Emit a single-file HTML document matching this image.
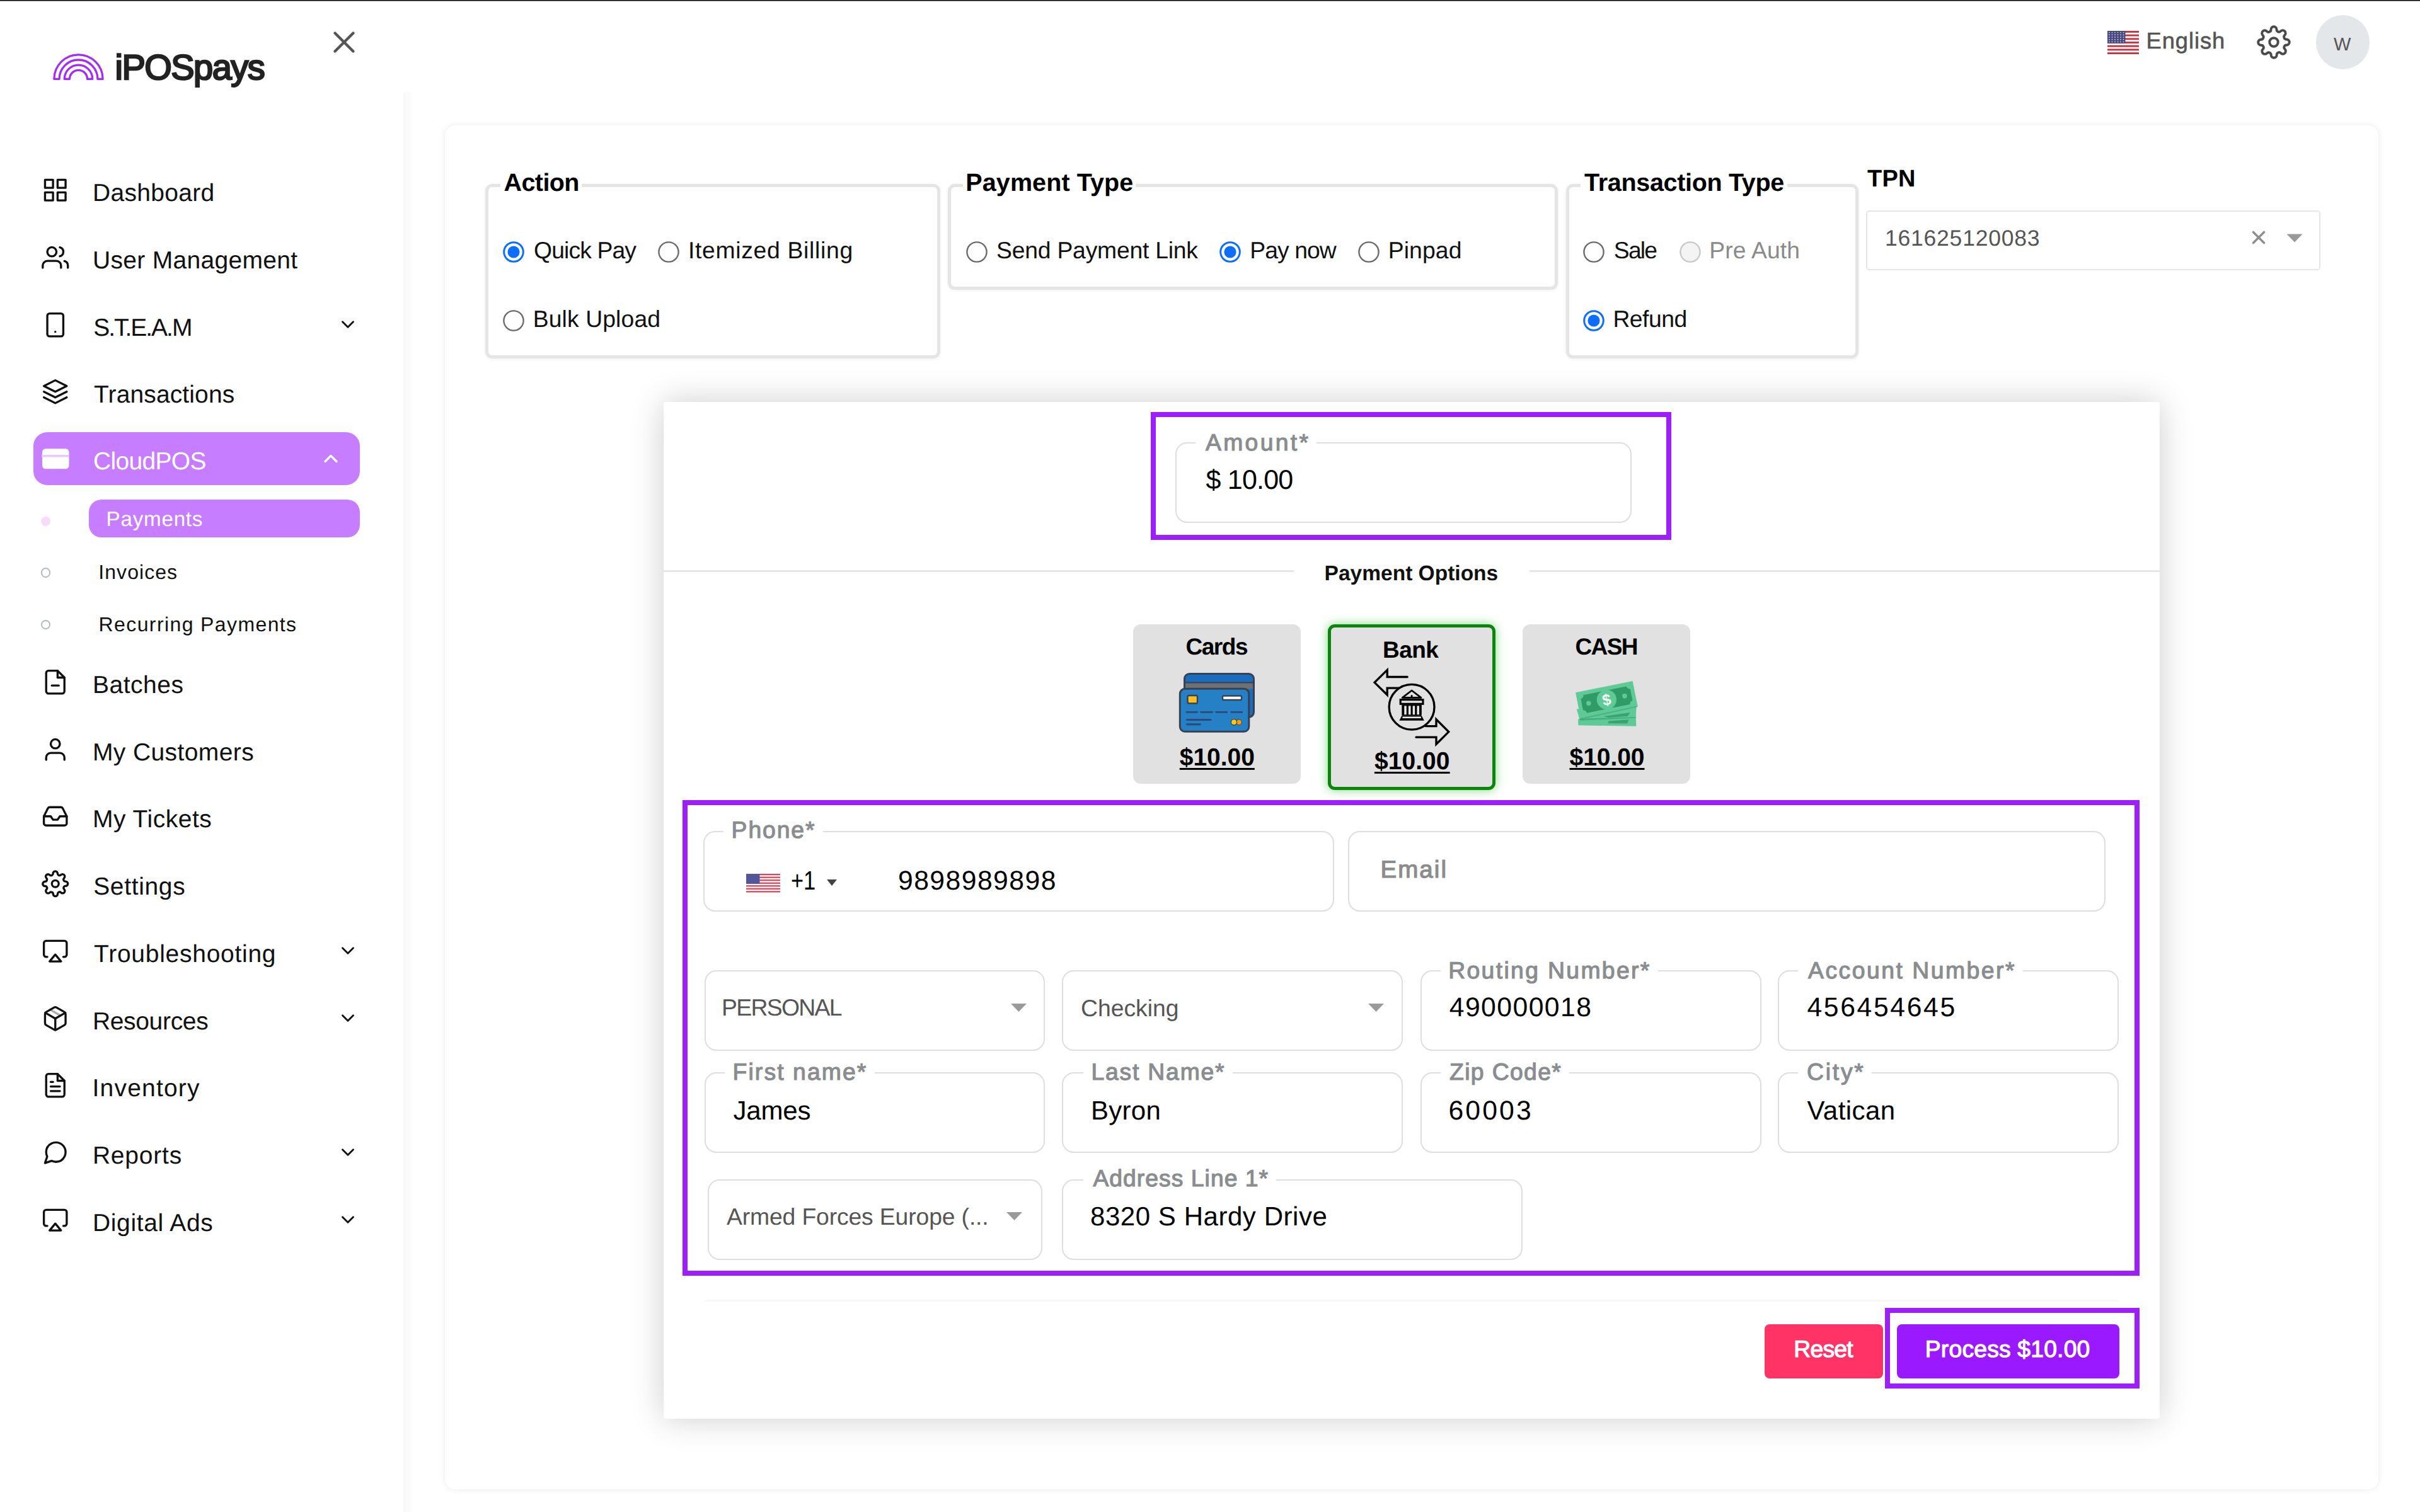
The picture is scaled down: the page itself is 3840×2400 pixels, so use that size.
<!DOCTYPE html>
<html lang="en"><head><meta charset="utf-8"><title>iPOSpays - Payments</title>
<style>
html,body{margin:0;padding:0;}
body{width:3840px;height:2400px;overflow:hidden;background:#fff;font-family:"Liberation Sans",sans-serif;position:relative;color:#000;}
.t{position:absolute;white-space:nowrap;line-height:1;display:block;text-rendering:geometricPrecision;font-kerning:normal;}
.b{position:absolute;box-sizing:border-box;}
svg{position:absolute;overflow:visible;}
@media (max-width:2000px){body{zoom:.5;}}
@media (max-width:1500px){body{zoom:.375;}}
@media (max-width:1300px){body{zoom:.33333;}}
@media (max-width:1000px){body{zoom:.25;}}
.ic{fill:none;stroke:#111;stroke-width:2;stroke-linecap:round;stroke-linejoin:round;}
</style></head><body>
<div class="b" style="left:0.0px;top:0.0px;width:3840.0px;height:1.0px;background:#000;"></div>
<div class="b" style="left:0.0px;top:1.0px;width:3840.0px;height:1.0px;background:#7d7d7d;"></div>
<div class="b" style="left:0.0px;top:2.0px;width:3840.0px;height:1.0px;background:#f2f2f2;"></div>
<div class="b" style="left:640.0px;top:146.0px;width:16.0px;height:2254.0px;background:linear-gradient(to right,#f8f8f8,#fcfcfc 70%,#fff);"></div>
<div class="b" style="left:706.0px;top:199.0px;width:3068.0px;height:2165.0px;background:#fff;border-radius:16px;box-shadow:0 0 10px rgba(0,0,0,.09);"></div>
<nav>
<svg style="left:80px;top:80px" width="90" height="52" viewBox="80 80 90 52" fill="none" stroke="#a52cf5" stroke-width="3.3" stroke-linejoin="round"><path d="M85.9 125.4 A38.6 38.6 0 0 1 163.1 125.4 H154.9 A30.4 30.4 0 0 0 94.1 125.4 Z"/><path d="M102.3 125.4 A22.2 22.2 0 0 1 146.7 125.4 H138.5 A14 14 0 0 0 110.5 125.4 Z"/></svg>
<span class="t" style="left:182.6px;top:79.1px;font-size:56.00px;letter-spacing:-1.56px;-webkit-text-stroke:2.52px #222;color:#222;">iPOSpays</span>
<svg class="ic" style="left:517.0px;top:37.5px;stroke:#555;stroke-width:1.8;fill:none;" width="58" height="58" viewBox="0 0 24 24"><line x1="18" y1="6" x2="6" y2="18"/><line x1="6" y1="6" x2="18" y2="18"/></svg>
<div class="b" style="left:53.0px;top:686.0px;width:518.0px;height:84.0px;background:#c77dff;border-radius:22px;"></div>
<svg class="ic" style="left:66.2px;top:279.8px;stroke:#111;stroke-width:1.85;fill:none;" width="43.5" height="43.5" viewBox="0 0 24 24"><rect x="3" y="3" width="7" height="7"/><rect x="14" y="3" width="7" height="7"/><rect x="14" y="14" width="7" height="7"/><rect x="3" y="14" width="7" height="7"/></svg>
<span class="t" style="left:146.9px;top:286.6px;font-size:39.00px;letter-spacing:0.32px;color:#111;">Dashboard</span>
<svg class="ic" style="left:66.2px;top:386.8px;stroke:#111;stroke-width:1.85;fill:none;" width="43.5" height="43.5" viewBox="0 0 24 24"><path d="M17 21v-2a4 4 0 0 0-4-4H5a4 4 0 0 0-4 4v2"/><circle cx="9" cy="7" r="4"/><path d="M23 21v-2a4 4 0 0 0-3-3.87"/><path d="M16 3.13a4 4 0 0 1 0 7.75"/></svg>
<span class="t" style="left:147.0px;top:393.6px;font-size:39.00px;letter-spacing:0.30px;color:#111;">User Management</span>
<svg class="ic" style="left:66.2px;top:493.8px;stroke:#111;stroke-width:1.85;fill:none;" width="43.5" height="43.5" viewBox="0 0 24 24"><rect x="5" y="2" width="14" height="20" rx="2" ry="2"/><line x1="12" y1="18" x2="12.01" y2="18"/></svg>
<span class="t" style="left:148.2px;top:500.6px;font-size:39.00px;letter-spacing:-2.02px;color:#111;">S.T.E.A.M</span>
<svg class="ic" style="left:535.0px;top:497.5px;stroke:#111;stroke-width:2;fill:none;" width="34" height="34" viewBox="0 0 24 24"><polyline points="6 9 12 15 18 9"/></svg>
<svg class="ic" style="left:66.2px;top:600.2px;stroke:#111;stroke-width:1.85;fill:none;" width="43.5" height="43.5" viewBox="0 0 24 24"><polygon points="12 2 2 7 12 12 22 7 12 2"/><polyline points="2 17 12 22 22 17"/><polyline points="2 12 12 17 22 12"/></svg>
<span class="t" style="left:149.1px;top:607.1px;font-size:39.00px;letter-spacing:0.12px;color:#111;">Transactions</span>
<svg class="ic" style="left:66.8px;top:707.2px;stroke:#fff;stroke-width:2;fill:#fff;" width="42.5" height="42.5" viewBox="0 0 24 24"><rect x="1" y="4" width="22" height="16" rx="2" ry="2"/><line x1="1" y1="10" x2="23" y2="10"/></svg>
<svg style="left:66px;top:722px" width="44" height="4"><rect width="44" height="3.5" fill="#e9c9ff"/></svg>
<span class="t" style="left:148.1px;top:712.6px;font-size:39.00px;letter-spacing:-0.69px;color:#fff;">CloudPOS</span>
<svg class="ic" style="left:507.0px;top:710.0px;stroke:#fff;stroke-width:2.2;fill:none;" width="36" height="36" viewBox="0 0 24 24"><polyline points="18 15 12 9 6 15"/></svg>
<svg class="ic" style="left:66.2px;top:1060.8px;stroke:#111;stroke-width:1.85;fill:none;" width="43.5" height="43.5" viewBox="0 0 24 24"><path d="M14 2H6a2 2 0 0 0-2 2v16a2 2 0 0 0 2 2h12a2 2 0 0 0 2-2V8z"/><polyline points="14 2 14 8 20 8"/><line x1="9" y1="15" x2="15" y2="15"/></svg>
<span class="t" style="left:146.9px;top:1067.6px;font-size:39.00px;letter-spacing:0.52px;color:#111;">Batches</span>
<svg class="ic" style="left:66.2px;top:1167.8px;stroke:#111;stroke-width:1.85;fill:none;" width="43.5" height="43.5" viewBox="0 0 24 24"><path d="M20 21v-2a4 4 0 0 0-4-4H8a4 4 0 0 0-4 4v2"/><circle cx="12" cy="7" r="4"/></svg>
<span class="t" style="left:146.9px;top:1174.6px;font-size:39.00px;letter-spacing:0.41px;color:#111;">My Customers</span>
<svg class="ic" style="left:66.2px;top:1274.2px;stroke:#111;stroke-width:1.85;fill:none;" width="43.5" height="43.5" viewBox="0 0 24 24"><polyline points="22 12 16 12 14 15 10 15 8 12 2 12"/><path d="M5.45 5.11L2 12v6a2 2 0 0 0 2 2h16a2 2 0 0 0 2-2v-6l-3.45-6.89A2 2 0 0 0 16.76 4H7.24a2 2 0 0 0-1.79 1.11z"/></svg>
<span class="t" style="left:146.9px;top:1281.1px;font-size:39.00px;letter-spacing:0.52px;color:#111;">My Tickets</span>
<svg class="ic" style="left:66.2px;top:1380.8px;stroke:#111;stroke-width:1.85;fill:none;" width="43.5" height="43.5" viewBox="0 0 24 24"><circle cx="12" cy="12" r="3"/><path d="M19.4 15a1.65 1.65 0 0 0 .33 1.82l.06.06a2 2 0 0 1 0 2.83 2 2 0 0 1-2.83 0l-.06-.06a1.65 1.65 0 0 0-1.82-.33 1.65 1.65 0 0 0-1 1.51V21a2 2 0 0 1-2 2 2 2 0 0 1-2-2v-.09A1.65 1.65 0 0 0 9 19.4a1.65 1.65 0 0 0-1.82.33l-.06.06a2 2 0 0 1-2.83 0 2 2 0 0 1 0-2.83l.06-.06a1.65 1.65 0 0 0 .33-1.82 1.65 1.65 0 0 0-1.51-1H3a2 2 0 0 1-2-2 2 2 0 0 1 2-2h.09A1.65 1.65 0 0 0 4.6 9a1.65 1.65 0 0 0-.33-1.82l-.06-.06a2 2 0 0 1 0-2.83 2 2 0 0 1 2.83 0l.06.06a1.65 1.65 0 0 0 1.82.33H9a1.65 1.65 0 0 0 1-1.51V3a2 2 0 0 1 2-2 2 2 0 0 1 2 2v.09a1.65 1.65 0 0 0 1 1.51 1.65 1.65 0 0 0 1.82-.33l.06-.06a2 2 0 0 1 2.83 0 2 2 0 0 1 0 2.83l-.06.06a1.65 1.65 0 0 0-.33 1.82V9a1.65 1.65 0 0 0 1.51 1H21a2 2 0 0 1 2 2 2 2 0 0 1-2 2h-.09a1.65 1.65 0 0 0-1.51 1z"/></svg>
<span class="t" style="left:148.2px;top:1387.6px;font-size:39.00px;letter-spacing:0.65px;color:#111;">Settings</span>
<svg class="ic" style="left:66.2px;top:1487.8px;stroke:#111;stroke-width:1.85;fill:none;" width="43.5" height="43.5" viewBox="0 0 24 24"><path d="M5 17H4a2 2 0 0 1-2-2V5a2 2 0 0 1 2-2h16a2 2 0 0 1 2 2v10a2 2 0 0 1-2 2h-1"/><polygon points="12 15 17 21 7 21 12 15"/></svg>
<span class="t" style="left:149.1px;top:1494.6px;font-size:39.00px;letter-spacing:0.73px;color:#111;">Troubleshooting</span>
<svg class="ic" style="left:535.0px;top:1491.5px;stroke:#111;stroke-width:2;fill:none;" width="34" height="34" viewBox="0 0 24 24"><polyline points="6 9 12 15 18 9"/></svg>
<svg class="ic" style="left:66.2px;top:1594.8px;stroke:#111;stroke-width:1.85;fill:none;" width="43.5" height="43.5" viewBox="0 0 24 24"><path d="M21 16V8a2 2 0 0 0-1-1.73l-7-4a2 2 0 0 0-2 0l-7 4A2 2 0 0 0 3 8v8a2 2 0 0 0 1 1.73l7 4a2 2 0 0 0 2 0l7-4A2 2 0 0 0 21 16z"/><polyline points="3.27 6.96 12 12.01 20.73 6.96"/><line x1="12" y1="22.08" x2="12" y2="12"/><line x1="16.5" y1="9.4" x2="7.5" y2="4.21" stroke-opacity=".35"/></svg>
<span class="t" style="left:146.9px;top:1601.6px;font-size:39.00px;letter-spacing:-0.33px;color:#111;">Resources</span>
<svg class="ic" style="left:535.0px;top:1598.5px;stroke:#111;stroke-width:2;fill:none;" width="34" height="34" viewBox="0 0 24 24"><polyline points="6 9 12 15 18 9"/></svg>
<svg class="ic" style="left:66.2px;top:1701.2px;stroke:#111;stroke-width:1.85;fill:none;" width="43.5" height="43.5" viewBox="0 0 24 24"><path d="M14 2H6a2 2 0 0 0-2 2v16a2 2 0 0 0 2 2h12a2 2 0 0 0 2-2V8z"/><polyline points="14 2 14 8 20 8"/><line x1="16" y1="13" x2="8" y2="13"/><line x1="16" y1="17" x2="8" y2="17"/><polyline points="10 9 9 9 8 9"/></svg>
<span class="t" style="left:146.5px;top:1708.1px;font-size:39.00px;letter-spacing:1.20px;color:#111;">Inventory</span>
<svg class="ic" style="left:66.2px;top:1808.2px;stroke:#111;stroke-width:1.85;fill:none;" width="43.5" height="43.5" viewBox="0 0 24 24"><path d="M21 11.5a8.38 8.38 0 0 1-.9 3.8 8.5 8.5 0 0 1-7.6 4.7 8.38 8.38 0 0 1-3.8-.9L3 21l1.9-5.7a8.38 8.38 0 0 1-.9-3.8 8.5 8.5 0 0 1 4.7-7.6 8.38 8.38 0 0 1 3.8-.9h.5a8.48 8.48 0 0 1 8 8v.5z"/></svg>
<span class="t" style="left:146.9px;top:1815.1px;font-size:39.00px;letter-spacing:0.80px;color:#111;">Reports</span>
<svg class="ic" style="left:535.0px;top:1812.0px;stroke:#111;stroke-width:2;fill:none;" width="34" height="34" viewBox="0 0 24 24"><polyline points="6 9 12 15 18 9"/></svg>
<svg class="ic" style="left:66.2px;top:1914.8px;stroke:#111;stroke-width:1.85;fill:none;" width="43.5" height="43.5" viewBox="0 0 24 24"><path d="M5 17H4a2 2 0 0 1-2-2V5a2 2 0 0 1 2-2h16a2 2 0 0 1 2 2v10a2 2 0 0 1-2 2h-1"/><polygon points="12 15 17 21 7 21 12 15"/></svg>
<span class="t" style="left:146.9px;top:1921.6px;font-size:39.00px;letter-spacing:0.66px;color:#111;">Digital Ads</span>
<svg class="ic" style="left:535.0px;top:1918.5px;stroke:#111;stroke-width:2;fill:none;" width="34" height="34" viewBox="0 0 24 24"><polyline points="6 9 12 15 18 9"/></svg>
<div class="b" style="left:141.0px;top:792.5px;width:430.0px;height:60.5px;background:#c77dff;border-radius:20px;"></div>
<div class="b" style="left:64.5px;top:819.5px;width:15.5px;height:15.5px;background:#f6dcfa;border-radius:50%;"></div>
<span class="t" style="left:168.6px;top:807.9px;font-size:33.20px;letter-spacing:0.75px;color:#fff;">Payments</span>
<div class="b" style="left:64.5px;top:901.0px;width:15.5px;height:15.5px;border:2.6px solid #b4b7c6;border-radius:50%;"></div>
<span class="t" style="left:156.3px;top:891.9px;font-size:32.00px;letter-spacing:1.06px;color:#111;">Invoices</span>
<div class="b" style="left:64.5px;top:983.5px;width:15.5px;height:15.5px;border:2.6px solid #b4b7c6;border-radius:50%;"></div>
<span class="t" style="left:156.6px;top:974.9px;font-size:32.00px;letter-spacing:1.39px;color:#111;">Recurring Payments</span>
</nav><header>
<svg style="left:3343.5px;top:49px" width="50" height="37" viewBox="0 0 50 37"><rect width="50" height="37" fill="#fff"/><rect y="0.00" width="50" height="2.85" fill="#c8313e"/><rect y="5.69" width="50" height="2.85" fill="#c8313e"/><rect y="11.38" width="50" height="2.85" fill="#c8313e"/><rect y="17.08" width="50" height="2.85" fill="#c8313e"/><rect y="22.77" width="50" height="2.85" fill="#c8313e"/><rect y="28.46" width="50" height="2.85" fill="#c8313e"/><rect y="34.15" width="50" height="2.85" fill="#c8313e"/><rect width="28.5" height="20" fill="#46487f"/><circle cx="3.0" cy="2.6" r="0.95" fill="#c9c9dd"/><circle cx="3.0" cy="6.3" r="0.95" fill="#c9c9dd"/><circle cx="3.0" cy="10.0" r="0.95" fill="#c9c9dd"/><circle cx="3.0" cy="13.7" r="0.95" fill="#c9c9dd"/><circle cx="3.0" cy="17.4" r="0.95" fill="#c9c9dd"/><circle cx="7.5" cy="2.6" r="0.95" fill="#c9c9dd"/><circle cx="7.5" cy="6.3" r="0.95" fill="#c9c9dd"/><circle cx="7.5" cy="10.0" r="0.95" fill="#c9c9dd"/><circle cx="7.5" cy="13.7" r="0.95" fill="#c9c9dd"/><circle cx="7.5" cy="17.4" r="0.95" fill="#c9c9dd"/><circle cx="12.0" cy="2.6" r="0.95" fill="#c9c9dd"/><circle cx="12.0" cy="6.3" r="0.95" fill="#c9c9dd"/><circle cx="12.0" cy="10.0" r="0.95" fill="#c9c9dd"/><circle cx="12.0" cy="13.7" r="0.95" fill="#c9c9dd"/><circle cx="12.0" cy="17.4" r="0.95" fill="#c9c9dd"/><circle cx="16.5" cy="2.6" r="0.95" fill="#c9c9dd"/><circle cx="16.5" cy="6.3" r="0.95" fill="#c9c9dd"/><circle cx="16.5" cy="10.0" r="0.95" fill="#c9c9dd"/><circle cx="16.5" cy="13.7" r="0.95" fill="#c9c9dd"/><circle cx="16.5" cy="17.4" r="0.95" fill="#c9c9dd"/><circle cx="21.0" cy="2.6" r="0.95" fill="#c9c9dd"/><circle cx="21.0" cy="6.3" r="0.95" fill="#c9c9dd"/><circle cx="21.0" cy="10.0" r="0.95" fill="#c9c9dd"/><circle cx="21.0" cy="13.7" r="0.95" fill="#c9c9dd"/><circle cx="21.0" cy="17.4" r="0.95" fill="#c9c9dd"/><circle cx="25.5" cy="2.6" r="0.95" fill="#c9c9dd"/><circle cx="25.5" cy="6.3" r="0.95" fill="#c9c9dd"/><circle cx="25.5" cy="10.0" r="0.95" fill="#c9c9dd"/><circle cx="25.5" cy="13.7" r="0.95" fill="#c9c9dd"/><circle cx="25.5" cy="17.4" r="0.95" fill="#c9c9dd"/></svg>
<span class="t" style="left:3405.5px;top:46.9px;font-size:36.30px;letter-spacing:0.96px;color:#555;-webkit-text-stroke:.6px #555;">English</span>
<svg class="ic" style="left:3581.0px;top:40.0px;stroke:#4a4a4a;stroke-width:1.75;fill:none;" width="54" height="54" viewBox="0 0 24 24"><circle cx="12" cy="12" r="3"/><path d="M19.4 15a1.65 1.65 0 0 0 .33 1.82l.06.06a2 2 0 0 1 0 2.83 2 2 0 0 1-2.83 0l-.06-.06a1.65 1.65 0 0 0-1.82-.33 1.65 1.65 0 0 0-1 1.51V21a2 2 0 0 1-2 2 2 2 0 0 1-2-2v-.09A1.65 1.65 0 0 0 9 19.4a1.65 1.65 0 0 0-1.82.33l-.06.06a2 2 0 0 1-2.83 0 2 2 0 0 1 0-2.83l.06-.06a1.65 1.65 0 0 0 .33-1.82 1.65 1.65 0 0 0-1.51-1H3a2 2 0 0 1-2-2 2 2 0 0 1 2-2h.09A1.65 1.65 0 0 0 4.6 9a1.65 1.65 0 0 0-.33-1.82l-.06-.06a2 2 0 0 1 0-2.83 2 2 0 0 1 2.83 0l.06.06a1.65 1.65 0 0 0 1.82.33H9a1.65 1.65 0 0 0 1-1.51V3a2 2 0 0 1 2-2 2 2 0 0 1 2 2v.09a1.65 1.65 0 0 0 1 1.51 1.65 1.65 0 0 0 1.82-.33l.06-.06a2 2 0 0 1 2.83 0 2 2 0 0 1 0 2.83l-.06.06a1.65 1.65 0 0 0-.33 1.82V9a1.65 1.65 0 0 0 1.51 1H21a2 2 0 0 1 2 2 2 2 0 0 1-2 2h-.09a1.65 1.65 0 0 0-1.51 1z"/></svg>
<div class="b" style="left:3674.5px;top:24.0px;width:85.5px;height:85.5px;background:#e4e7e9;border-radius:50%;"></div>
<span class="t" style="left:3702.9px;top:57.0px;font-size:29.00px;color:#555;">W</span>
</header><main>
<div class="b" style="left:770.1px;top:292.3px;width:722.1px;height:276.9px;border:5.33px solid #e5e5e5;border-radius:11px;box-shadow:0 1px 5px rgba(0,0,0,.07);"></div>
<div class="b" style="left:794.0px;top:289.3px;width:128.5px;height:11.0px;background:#fff;"></div>
<span class="t" style="left:799.6px;top:271.3px;font-size:39.50px;letter-spacing:-0.62px;font-weight:700;">Action</span>
<svg style="left:798px;top:382.5px" width="34" height="34" viewBox="0 0 34 34"><circle cx="17" cy="17" r="15.3" fill="#fff" stroke="#0d6efd" stroke-width="3"/><circle cx="17" cy="17" r="9.6" fill="#0d6efd"/></svg>
<span class="t" style="left:847.0px;top:379.4px;font-size:37.30px;letter-spacing:-0.88px;color:#111;">Quick Pay</span>
<svg style="left:1044px;top:382.5px" width="34" height="34" viewBox="0 0 34 34"><circle cx="17" cy="17" r="15.6" fill="#fff" stroke="#6b6b6b" stroke-width="2.4"/></svg>
<span class="t" style="left:1091.9px;top:379.4px;font-size:37.30px;letter-spacing:0.70px;color:#111;">Itemized Billing</span>
<svg style="left:798px;top:492px" width="34" height="34" viewBox="0 0 34 34"><circle cx="17" cy="17" r="15.6" fill="#fff" stroke="#6b6b6b" stroke-width="2.4"/></svg>
<span class="t" style="left:845.7px;top:488.4px;font-size:37.30px;letter-spacing:0.12px;color:#111;">Bulk Upload</span>
<div class="b" style="left:1504.3px;top:292.3px;width:967.6px;height:167.7px;border:5.33px solid #e5e5e5;border-radius:11px;box-shadow:0 1px 5px rgba(0,0,0,.07);"></div>
<div class="b" style="left:1528.4px;top:289.3px;width:274.0px;height:11.0px;background:#fff;"></div>
<span class="t" style="left:1532.3px;top:271.3px;font-size:39.50px;letter-spacing:0.10px;font-weight:700;">Payment Type</span>
<svg style="left:1532.5px;top:382.5px" width="34" height="34" viewBox="0 0 34 34"><circle cx="17" cy="17" r="15.6" fill="#fff" stroke="#6b6b6b" stroke-width="2.4"/></svg>
<span class="t" style="left:1581.1px;top:379.4px;font-size:37.30px;letter-spacing:-0.22px;color:#111;">Send Payment Link</span>
<svg style="left:1935px;top:382.5px" width="34" height="34" viewBox="0 0 34 34"><circle cx="17" cy="17" r="15.3" fill="#fff" stroke="#0d6efd" stroke-width="3"/><circle cx="17" cy="17" r="9.6" fill="#0d6efd"/></svg>
<span class="t" style="left:1983.3px;top:379.4px;font-size:37.30px;letter-spacing:-0.95px;color:#111;">Pay now</span>
<svg style="left:2155px;top:382.5px" width="34" height="34" viewBox="0 0 34 34"><circle cx="17" cy="17" r="15.6" fill="#fff" stroke="#6b6b6b" stroke-width="2.4"/></svg>
<span class="t" style="left:2202.7px;top:379.4px;font-size:37.30px;letter-spacing:0.13px;color:#111;">Pinpad</span>
<div class="b" style="left:2484.8px;top:292.3px;width:464.5px;height:276.9px;border:5.33px solid #e5e5e5;border-radius:11px;box-shadow:0 1px 5px rgba(0,0,0,.07);"></div>
<div class="b" style="left:2508.0px;top:289.3px;width:327.5px;height:11.0px;background:#fff;"></div>
<span class="t" style="left:2514.1px;top:271.3px;font-size:39.50px;letter-spacing:-0.32px;font-weight:700;">Transaction Type</span>
<svg style="left:2512px;top:382.5px" width="34" height="34" viewBox="0 0 34 34"><circle cx="17" cy="17" r="15.6" fill="#fff" stroke="#6b6b6b" stroke-width="2.4"/></svg>
<span class="t" style="left:2560.8px;top:379.4px;font-size:37.30px;letter-spacing:-1.79px;color:#111;">Sale</span>
<svg style="left:2664.5px;top:382.5px" width="34" height="34" viewBox="0 0 34 34"><circle cx="17" cy="17" r="15.6" fill="#f4f4f4" stroke="#c9c9c9" stroke-width="2.4"/></svg>
<span class="t" style="left:2712.2px;top:379.4px;font-size:37.30px;letter-spacing:0.11px;color:#8a8a8a;">Pre Auth</span>
<svg style="left:2512px;top:492px" width="34" height="34" viewBox="0 0 34 34"><circle cx="17" cy="17" r="15.3" fill="#fff" stroke="#0d6efd" stroke-width="3"/><circle cx="17" cy="17" r="9.6" fill="#0d6efd"/></svg>
<span class="t" style="left:2559.4px;top:488.4px;font-size:37.30px;letter-spacing:-0.49px;color:#111;">Refund</span>
<span class="t" style="left:2963.1px;top:264.6px;font-size:38.00px;letter-spacing:0.19px;font-weight:700;">TPN</span>
<div class="b" style="left:2960.5px;top:333.5px;width:721.5px;height:95.5px;border:2.67px solid #e6e6e6;border-radius:5px;background:#fff;"></div>
<span class="t" style="left:2990.9px;top:360.9px;font-size:35.50px;letter-spacing:0.80px;color:#555;">161625120083</span>
<svg class="ic" style="left:3566.7px;top:359.5px;stroke:#8e8e8e;stroke-width:2.5;fill:none;" width="34" height="34" viewBox="0 0 24 24"><line x1="18" y1="6" x2="6" y2="18"/><line x1="6" y1="6" x2="18" y2="18"/></svg>
<svg style="left:3627.5px;top:370.5px" width="26" height="14" viewBox="0 0 26 14"><path d="M0.5 0.5h25L13 13.5z" fill="#9a9a9a"/></svg>
<div class="b" style="left:1053.0px;top:638.0px;width:2374.0px;height:1614.0px;background:#fff;border-radius:4px;box-shadow:0 0 53px rgba(0,0,0,.2);"></div>
<div class="b" style="left:1826.3px;top:653.7px;width:825.4px;height:203.3px;border:8px solid #9d1ffb;"></div>
<div class="b" style="left:1865.0px;top:702.2px;width:724.0px;height:128.0px;border:2.67px solid #dedede;border-radius:18.7px;background:#fff;"></div>
<div class="b" style="left:1897.4px;top:701.2px;width:192.0px;height:6.0px;background:#fff;"></div>
<span class="t" style="left:1913.0px;top:683.6px;font-size:37.30px;letter-spacing:3.32px;-webkit-text-stroke:1.19px #8a8d90;color:#8a8d90;">Amount*</span>
<span class="t" style="left:1913.6px;top:741.3px;font-size:43.00px;letter-spacing:-0.81px;">$ 10.00</span>
<div class="b" style="left:1053.0px;top:905.2px;width:2374.0px;height:2.7px;background:#e6e6e6;"></div>
<div class="b" style="left:2053.0px;top:900.0px;width:374.0px;height:14.0px;background:#fff;"></div>
<span class="t" style="left:2101.6px;top:894.0px;font-size:33.50px;letter-spacing:0.01px;font-weight:700;color:#111;">Payment Options</span>
<div class="b" style="left:1797.7px;top:991.0px;width:266.3px;height:252.7px;background:#e1e1e1;border-radius:12px;"></div>
<div class="b" style="left:2107.0px;top:991.0px;width:266.0px;height:262.6px;background:#e1e1e1;border-radius:11px;border:5.3px solid #0b850b;box-shadow:0 0 16px rgba(50,190,50,.6);"></div>
<div class="b" style="left:2416.0px;top:991.0px;width:266.0px;height:252.7px;background:#e1e1e1;border-radius:12px;"></div>
<span class="t" style="left:1881.5px;top:1008.0px;font-size:37.00px;letter-spacing:-1.47px;font-weight:700;">Cards</span>
<span class="t" style="left:2194.1px;top:1012.7px;font-size:37.00px;letter-spacing:-0.54px;font-weight:700;">Bank</span>
<span class="t" style="left:2499.5px;top:1008.0px;font-size:37.00px;letter-spacing:-1.62px;font-weight:700;">CASH</span>
<span class="t" style="left:1871.8px;top:1182.5px;font-size:39.00px;letter-spacing:-0.05px;font-weight:700;text-decoration:underline;text-decoration-thickness:3px;text-underline-offset:4px;">$10.00</span>
<span class="t" style="left:2180.9px;top:1188.5px;font-size:39.00px;letter-spacing:0.07px;font-weight:700;text-decoration:underline;text-decoration-thickness:3px;text-underline-offset:4px;">$10.00</span>
<span class="t" style="left:2490.5px;top:1182.5px;font-size:39.00px;letter-spacing:-0.05px;font-weight:700;text-decoration:underline;text-decoration-thickness:3px;text-underline-offset:4px;">$10.00</span>
<div class="b" style="left:1082.6px;top:1269.8px;width:2312.2px;height:755.2px;border:8px solid #9d1ffb;"></div>
<div class="b" style="left:1115.7px;top:1318.8px;width:1001.3px;height:128.0px;border:2.67px solid #dedede;border-radius:18.7px;background:#fff;"></div>
<div class="b" style="left:1148.0px;top:1317.8px;width:158.0px;height:6.0px;background:#fff;"></div>
<span class="t" style="left:1160.6px;top:1298.8px;font-size:37.30px;letter-spacing:1.91px;-webkit-text-stroke:1.19px #8a8d90;color:#8a8d90;">Phone*</span>
<svg style="left:1183.8px;top:1387px" width="54" height="29.5" viewBox="0 0 54 29.5"><rect width="54" height="29.5" fill="#fff"/><rect y="0.00" width="54" height="2.27" fill="#d9465a"/><rect y="4.54" width="54" height="2.27" fill="#d9465a"/><rect y="9.08" width="54" height="2.27" fill="#d9465a"/><rect y="13.62" width="54" height="2.27" fill="#d9465a"/><rect y="18.16" width="54" height="2.27" fill="#d9465a"/><rect y="22.70" width="54" height="2.27" fill="#d9465a"/><rect y="27.24" width="54" height="2.27" fill="#d9465a"/><rect width="21.5" height="15.9" fill="#52569a"/></svg>
<span class="t" style="left:1254.8px;top:1376.9px;font-size:42.00px;transform:scaleX(0.8205);transform-origin:0 0;">+1</span>
<svg style="left:1312px;top:1395.6px" width="16" height="10" viewBox="0 0 16 10"><path d="M0 0h16L8.0 10z" fill="#444"/></svg>
<span class="t" style="left:1425.0px;top:1376.6px;font-size:42.70px;letter-spacing:1.44px;">9898989898</span>
<div class="b" style="left:2138.7px;top:1318.8px;width:1202.8px;height:128.0px;border:2.67px solid #dedede;border-radius:18.7px;background:#fff;"></div>
<span class="t" style="left:2190.5px;top:1362.2px;font-size:38.50px;letter-spacing:2.04px;-webkit-text-stroke:1.23px #8c8c8c;color:#8c8c8c;">Email</span>
<div class="b" style="left:1117.7px;top:1539.9px;width:540.3px;height:128.0px;border:2.67px solid #dedede;border-radius:18.7px;background:#fff;"></div>
<span class="t" style="left:1145.0px;top:1581.4px;font-size:37.30px;letter-spacing:-1.66px;color:#555;">PERSONAL</span>
<svg style="left:1603.6px;top:1593px" width="25" height="13" viewBox="0 0 25 13"><path d="M0 0h25L12.5 13z" fill="#9a9a9a"/></svg>
<div class="b" style="left:1684.8px;top:1539.9px;width:541.2px;height:128.0px;border:2.67px solid #dedede;border-radius:18.7px;background:#fff;"></div>
<span class="t" style="left:1715.1px;top:1581.9px;font-size:37.30px;letter-spacing:-0.02px;color:#555;">Checking</span>
<svg style="left:2170.6px;top:1593px" width="25" height="13" viewBox="0 0 25 13"><path d="M0 0h25L12.5 13z" fill="#9a9a9a"/></svg>
<div class="b" style="left:2253.8px;top:1539.9px;width:540.8px;height:128.0px;border:2.67px solid #dedede;border-radius:18.7px;background:#fff;"></div>
<div class="b" style="left:2285.6px;top:1538.9px;width:345.0px;height:6.0px;background:#fff;"></div>
<span class="t" style="left:2298.2px;top:1521.8px;font-size:37.30px;letter-spacing:2.36px;-webkit-text-stroke:1.19px #8a8d90;color:#8a8d90;">Routing Number*</span>
<span class="t" style="left:2299.7px;top:1578.1px;font-size:42.70px;letter-spacing:1.45px;">490000018</span>
<div class="b" style="left:2821.0px;top:1539.9px;width:541.0px;height:128.0px;border:2.67px solid #dedede;border-radius:18.7px;background:#fff;"></div>
<div class="b" style="left:2853.4px;top:1538.9px;width:356.4px;height:6.0px;background:#fff;"></div>
<span class="t" style="left:2869.0px;top:1521.8px;font-size:37.30px;letter-spacing:2.52px;-webkit-text-stroke:1.19px #8a8d90;color:#8a8d90;">Account Number*</span>
<span class="t" style="left:2867.5px;top:1578.1px;font-size:42.70px;letter-spacing:2.63px;">456454645</span>
<div class="b" style="left:1117.7px;top:1701.8px;width:540.3px;height:128.0px;border:2.67px solid #dedede;border-radius:18.7px;background:#fff;"></div>
<div class="b" style="left:1150.0px;top:1700.8px;width:237.7px;height:6.0px;background:#fff;"></div>
<span class="t" style="left:1162.6px;top:1682.9px;font-size:37.30px;letter-spacing:2.10px;-webkit-text-stroke:1.19px #8a8d90;color:#8a8d90;">First name*</span>
<span class="t" style="left:1163.4px;top:1742.0px;font-size:42.00px;letter-spacing:-0.16px;">James</span>
<div class="b" style="left:1684.8px;top:1701.8px;width:541.2px;height:128.0px;border:2.67px solid #dedede;border-radius:18.7px;background:#fff;"></div>
<div class="b" style="left:1718.8px;top:1700.8px;width:237.2px;height:6.0px;background:#fff;"></div>
<span class="t" style="left:1731.4px;top:1682.9px;font-size:37.30px;letter-spacing:1.82px;-webkit-text-stroke:1.19px #8a8d90;color:#8a8d90;">Last Name*</span>
<span class="t" style="left:1731.0px;top:1741.9px;font-size:42.00px;letter-spacing:0.26px;">Byron</span>
<div class="b" style="left:2253.8px;top:1701.8px;width:540.8px;height:128.0px;border:2.67px solid #dedede;border-radius:18.7px;background:#fff;"></div>
<div class="b" style="left:2285.6px;top:1700.8px;width:204.5px;height:6.0px;background:#fff;"></div>
<span class="t" style="left:2300.1px;top:1682.9px;font-size:37.30px;letter-spacing:1.35px;-webkit-text-stroke:1.19px #8a8d90;color:#8a8d90;">Zip Code*</span>
<span class="t" style="left:2298.5px;top:1742.1px;font-size:42.70px;letter-spacing:3.12px;">60003</span>
<div class="b" style="left:2821.0px;top:1701.8px;width:541.0px;height:128.0px;border:2.67px solid #dedede;border-radius:18.7px;background:#fff;"></div>
<div class="b" style="left:2853.4px;top:1700.8px;width:117.0px;height:6.0px;background:#fff;"></div>
<span class="t" style="left:2867.1px;top:1682.9px;font-size:37.30px;letter-spacing:2.76px;-webkit-text-stroke:1.19px #8a8d90;color:#8a8d90;">City*</span>
<span class="t" style="left:2867.5px;top:1741.9px;font-size:42.00px;letter-spacing:0.46px;">Vatican</span>
<div class="b" style="left:1122.5px;top:1871.7px;width:531.0px;height:128.0px;border:2.67px solid #dedede;border-radius:18.7px;background:#fff;"></div>
<span class="t" style="left:1153.0px;top:1912.8px;font-size:37.30px;letter-spacing:-0.13px;color:#555;">Armed Forces Europe (...</span>
<svg style="left:1597px;top:1923.8px" width="25" height="13" viewBox="0 0 25 13"><path d="M0 0h25L12.5 13z" fill="#9a9a9a"/></svg>
<div class="b" style="left:1684.8px;top:1871.7px;width:731.7px;height:128.0px;border:2.67px solid #dedede;border-radius:18.7px;background:#fff;"></div>
<div class="b" style="left:1718.8px;top:1870.7px;width:306.6px;height:6.0px;background:#fff;"></div>
<span class="t" style="left:1734.4px;top:1851.9px;font-size:37.30px;letter-spacing:1.03px;-webkit-text-stroke:1.19px #8a8d90;color:#8a8d90;">Address Line 1*</span>
<span class="t" style="left:1730.0px;top:1910.0px;font-size:42.00px;letter-spacing:0.55px;">8320 S Hardy Drive</span>
<div class="b" style="left:1118.7px;top:2063.0px;width:2242.3px;height:3.0px;background:#f7f7f7;"></div>
<div class="b" style="left:2800.0px;top:2102.4px;width:188.0px;height:85.6px;background:#ff3366;border-radius:8px;"></div>
<span class="t" style="left:2846.2px;top:2122.9px;font-size:37.30px;letter-spacing:-0.73px;-webkit-text-stroke:1.19px #fff;color:#fff;">Reset</span>
<div class="b" style="left:2991.0px;top:2075.6px;width:404.2px;height:128.7px;border:8px solid #9d1ffb;"></div>
<div class="b" style="left:3009.5px;top:2102.4px;width:353.2px;height:85.6px;background:#9b19ff;border-radius:8px;"></div>
<span class="t" style="left:3054.8px;top:2122.9px;font-size:37.30px;letter-spacing:0.18px;-webkit-text-stroke:1.19px #fff;color:#fff;">Process $10.00</span>
<svg style="left:1868px;top:1065px" width="126" height="100" viewBox="1868 1065 126 100"><rect x="1879.5" y="1069.5" width="110" height="69" rx="8" fill="#1a6dbd" stroke="#364152" stroke-width="3"/><rect x="1881" y="1083.5" width="107" height="10" fill="#6e6f77"/><path d="M1881 1083.5h107" stroke="#364152" stroke-width="2" fill="none"/><rect x="1872.3" y="1093.3" width="109.5" height="68" rx="8" fill="#2680c6" stroke="#364152" stroke-width="3"/><rect x="1884.5" y="1104" width="15.5" height="12.5" rx="2" fill="#fbbf24" stroke="#364152" stroke-width="2.4"/><rect x="1940" y="1104.5" width="30" height="6.5" rx="1.5" fill="#fff" stroke="#364152" stroke-width="2.4"/><path d="M1883 1130.4h16.5M1905.5 1130.4h18M1929.5 1130.4h17.5M1953.5 1130.4h17.5" stroke="#2b4a78" stroke-width="2.6" stroke-linecap="round" fill="none"/><path d="M1883.5 1142.4h37.5M1883.5 1149.7h21" stroke="#2b4a78" stroke-width="3" stroke-linecap="round" fill="none"/><circle cx="1966" cy="1146.3" r="4.4" fill="#f59e0b" stroke="#364152" stroke-width="1"/><circle cx="1958" cy="1146.3" r="4.6" fill="#facc15" stroke="#364152" stroke-width="1.2"/></svg>
<svg style="left:2160px;top:1050px" width="160" height="140" viewBox="0 0 1728 1512"><g fill="none" stroke="#000" stroke-width="36" stroke-linecap="round" stroke-linejoin="miter"><path d="M790 265H445V145L228 360L445 572V455H640"/><circle cx="865" cy="780" r="388"/><path d="M940 1298H1285V1418L1498 1205L1285 992V1108H1105"/><path d="M865 497L705 620H1025Z" stroke-width="30" stroke-linejoin="round"/><rect x="672" y="655" width="386" height="72" stroke-width="34"/></g><circle cx="865" cy="590" r="17" fill="#000"/><rect x="695" y="745" width="340" height="175" fill="#000"/><rect x="737" y="760" width="38" height="150" fill="#e9e9e9"/><rect x="810" y="760" width="38" height="150" fill="#e9e9e9"/><rect x="882" y="760" width="38" height="150" fill="#e9e9e9"/><rect x="955" y="760" width="38" height="150" fill="#e9e9e9"/><path d="M700 922H1030L1078 1012H652Z" fill="#000"/><rect x="706" y="945" width="318" height="28" fill="#e9e9e9"/></svg>
<svg style="left:2480px;top:1060px" width="140" height="110" viewBox="0 0 1924 1512"><path d="M330 1120L1590 1000L1598 1275L335 1255Z" fill="#5fca96"/><path d="M1000 1160L1440 1130L1400 1215L980 1212Z" fill="#3aa372"/><path d="M300 900L1605 820L1590 1085L370 1150Z" fill="#5fca96"/><path d="M880 1060L1470 975L1410 1060L1000 1085Z" fill="#3aa372"/><path d="M360 1110L1590 1075L1592 1095L372 1150Z" fill="#3aa372" opacity=".7"/><g transform="translate(275 540) rotate(-11.35)"><rect width="1270" height="570" fill="#5fca96"/><path d="M155 85H1115A70 70 0 0 0 1185 155V415A70 70 0 0 0 1115 485H155A70 70 0 0 0 85 415V155A70 70 0 0 0 155 85Z" fill="#319b68"/><circle cx="635" cy="285" r="215" fill="#5fca96"/><circle cx="235" cy="285" r="52" fill="#5fca96"/><circle cx="1035" cy="285" r="52" fill="#5fca96"/><text x="635" y="405" text-anchor="middle" font-family="Liberation Sans, sans-serif" font-weight="700" font-size="340" fill="#f4fff8">$</text></g><path d="M385 1100L1610 830L1612 860L392 1128Z" fill="#3aa372" opacity=".55"/></svg>
</main>
</body></html>
